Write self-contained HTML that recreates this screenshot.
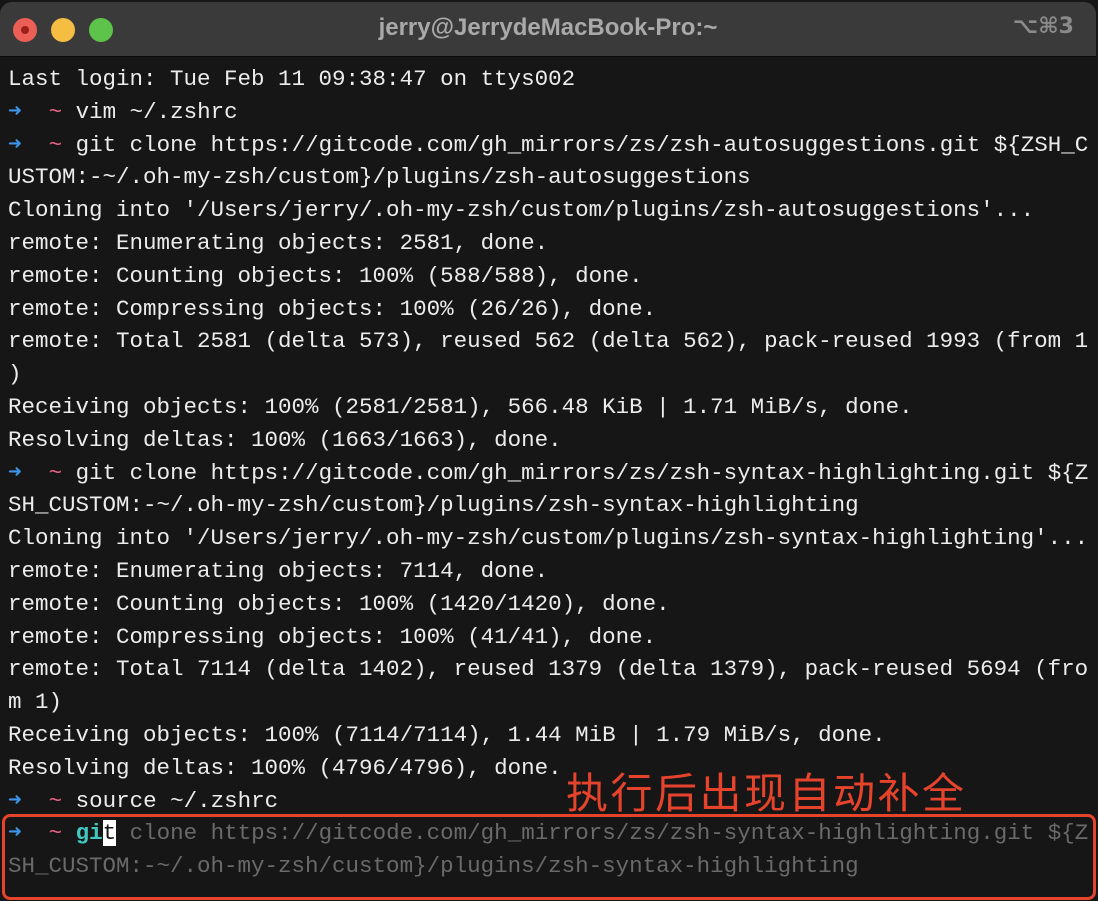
<!DOCTYPE html>
<html><head><meta charset="utf-8"><style>
html,body{margin:0;padding:0;background:#161616;width:1098px;height:901px;overflow:hidden}
.win{position:absolute;left:0;top:0;width:1098px;height:901px;background:#161616}
.tb{position:absolute;left:0;top:2px;width:1096px;height:54px;background:#3a3a3a;border-radius:12px 12px 0 0;border-bottom:1px solid #0a0a0a}
.dot{position:absolute;top:16px;width:24px;height:24px;border-radius:50%}
.title{position:absolute;left:0;right:0;top:12px;text-align:center;color:#a9a9a9;font:bold 24px "Liberation Sans",sans-serif}
.kb{position:absolute;right:22px;top:12px;color:#8a8a8a;font:bold 22px "DejaVu Sans",sans-serif}
pre{position:absolute;left:8px;top:63px;margin:0;font:22.5px/32.8px "Liberation Mono",monospace;color:#ececec;white-space:pre}
.a{color:#3b95e8;font-weight:bold}.t{color:#e9648a}.g{color:#3fc7c0;font-weight:bold}.d{color:#6a6a6a}
.cur{background:#fff;color:#111}
.box{position:absolute;left:2px;top:814px;width:1088px;height:80px;border:3px solid #e5432c;border-radius:8px}
.cn{position:absolute;left:566px;top:760px;color:#e5432c;font:42px "Noto Sans CJK SC",sans-serif;letter-spacing:2.5px}
</style></head><body><div class="win">
<div class="tb">
<div class="dot" style="left:13px;background:#ec5f56"><div style="position:absolute;left:8px;top:8px;width:8px;height:8px;border-radius:50%;background:#9a2018"></div></div>
<div class="dot" style="left:51px;background:#f5bd41"></div>
<div class="dot" style="left:89px;background:#5dc34a"></div>
<div class="title">jerry@JerrydeMacBook-Pro:~</div>
<div class="kb">⌥⌘3</div>
</div>
<pre>Last login: Tue Feb 11 09:38:47 on ttys002
<span class="a">➜</span>  <span class="t">~</span> vim ~/.zshrc
<span class="a">➜</span>  <span class="t">~</span> git clone https://gitcode.com/gh_mirrors/zs/zsh-autosuggestions.git ${ZSH_C
USTOM:-~/.oh-my-zsh/custom}/plugins/zsh-autosuggestions
Cloning into '/Users/jerry/.oh-my-zsh/custom/plugins/zsh-autosuggestions'...
remote: Enumerating objects: 2581, done.
remote: Counting objects: 100% (588/588), done.
remote: Compressing objects: 100% (26/26), done.
remote: Total 2581 (delta 573), reused 562 (delta 562), pack-reused 1993 (from 1
)
Receiving objects: 100% (2581/2581), 566.48 KiB | 1.71 MiB/s, done.
Resolving deltas: 100% (1663/1663), done.
<span class="a">➜</span>  <span class="t">~</span> git clone https://gitcode.com/gh_mirrors/zs/zsh-syntax-highlighting.git ${Z
SH_CUSTOM:-~/.oh-my-zsh/custom}/plugins/zsh-syntax-highlighting
Cloning into '/Users/jerry/.oh-my-zsh/custom/plugins/zsh-syntax-highlighting'...
remote: Enumerating objects: 7114, done.
remote: Counting objects: 100% (1420/1420), done.
remote: Compressing objects: 100% (41/41), done.
remote: Total 7114 (delta 1402), reused 1379 (delta 1379), pack-reused 5694 (fro
m 1)
Receiving objects: 100% (7114/7114), 1.44 MiB | 1.79 MiB/s, done.
Resolving deltas: 100% (4796/4796), done.
<span class="a">➜</span>  <span class="t">~</span> source ~/.zshrc
<span class="a">➜</span>  <span class="t">~</span> <span class="g">gi</span><span class="cur">t</span><span class="d"> clone https://gitcode.com/gh_mirrors/zs/zsh-syntax-highlighting.git ${Z
SH_CUSTOM:-~/.oh-my-zsh/custom}/plugins/zsh-syntax-highlighting</span></pre>
<div class="box"></div>
<div class="cn">执行后出现自动补全</div>
</div></body></html>
